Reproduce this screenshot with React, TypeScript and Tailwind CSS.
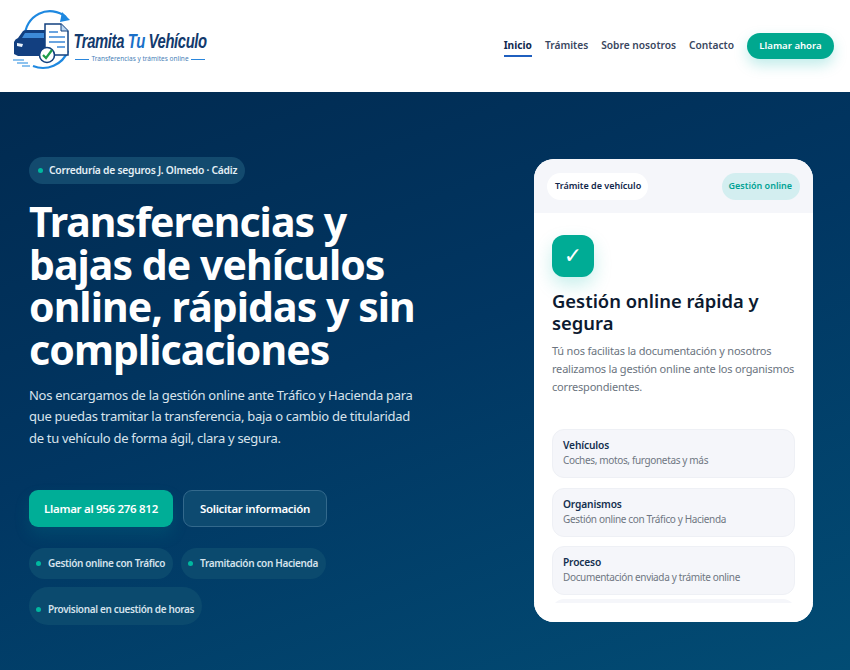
const Logo = () => {
  return (
    <div className="flex items-center">
      <svg width="60" height="80" viewBox="12 6 60 80" className="shrink-0">
        <path d="M25 37 A25 25 0 0 1 66 17" fill="none" stroke="#1e88e0" strokeWidth="2.2" />
        <path d="M62 12 L70 20 L60 22 Z" fill="#1e88e0" />
        <path d="M33 66 A27 27 0 0 0 68 51" fill="none" stroke="#1e88e0" strokeWidth="2.2" />
        <path d="M14 50 L14 42 Q15 39 18 38 L23 31 Q24 30 27 30 L45 30 L45 56 L18 56 L14 54 Z" fill="#123f80" />
        <path d="M22 38 L25 33 L44 33 L44 38 Z" fill="#3d8ad8" />
        <path d="M17 43 L23 44 L22 47 L17 46 Z" fill="#e8f1fb" />
        <path d="M13 60 H24 M17 63 H28 M22 66 H30" stroke="#1e88e0" strokeWidth="1.2" />
        <path d="M45 24 L61 24 L68 31 L68 55 L45 55 Z" fill="#ffffff" stroke="#12407f" strokeWidth="1.5" />
        <path d="M61 24 L61 31 L68 31" fill="#bcd8f3" stroke="#12407f" strokeWidth="1" />
        <path d="M49 32 H58 M49 37 H65 M49 42 H65 M57 47 H65" stroke="#3a86d6" strokeWidth="1.4" />
        <circle cx="47" cy="55" r="7.5" fill="#ffffff" stroke="#12407f" strokeWidth="1.6" />
        <path d="M43 55 L46 58 L52 50" fill="none" stroke="#1f9e4a" strokeWidth="2.2" />
      </svg>
      <div className="flex flex-col items-center ml-px mt-px w-[134px]">
        <span className="font-['Liberation_Sans',sans-serif] italic font-bold text-[20px] leading-[22px] text-[#123a6d] tracking-[-0.5px] whitespace-nowrap scale-x-[0.74]">
          Tramita <span className="text-[#1a70c8]">Tu</span> Vehículo
        </span>
        <div className="flex items-center gap-[2px] mt-[3px]">
          <span className="w-[14px] h-px bg-[#2a86dc]" />
          <span className="text-[6.5px] leading-[8px] text-[#4a7fb8] whitespace-nowrap">
            Transferencias y trámites online
          </span>
          <span className="w-[14px] h-px bg-[#2a86dc]" />
        </div>
      </div>
    </div>
  );
};

const Header = () => {
  return (
    <header className="h-[92px] bg-white flex items-center justify-between pl-[12px] pr-[16px]">
      <Logo />
      <nav className="flex items-center gap-[13px] text-[10.2px] font-semibold text-[#3a4760]">
        <a href="#" className="font-bold text-[#10294f] border-b-2 border-[#1f5fbf] pb-px mt-[3px]">
          Inicio
        </a>
        <a href="#">Trámites</a>
        <a href="#">Sobre nosotros</a>
        <a href="#">Contacto</a>
        <a
          href="#"
          className="w-[87px] h-[26px] flex items-center justify-center rounded-full bg-[#00a88f] text-[9.6px] text-white shadow-[0_6px_14px_rgba(0,180,170,0.25)]"
        >
          Llamar ahora
        </a>
      </nav>
    </header>
  );
};

const Chip = ({ children, tall }: { children: string; tall?: boolean }) => {
  return (
    <span
      className={
        tall
          ? "h-[38px] pt-[6px] pl-[7px] pr-[8px] flex items-center gap-[7px] rounded-[19px] bg-[#0b4a6e] text-[10px] tracking-[-0.35px] font-semibold text-[#d5e2ec] whitespace-nowrap"
          : "h-[31px] pl-[7px] pr-[8px] flex items-center gap-[7px] rounded-full bg-[#0b4a6e] text-[10px] tracking-[-0.35px] font-semibold text-[#d5e2ec] whitespace-nowrap"
      }
    >
      <span className="w-[5px] h-[5px] rounded-full bg-[#00b8a0]" />
      {children}
    </span>
  );
};

const InfoRow = ({ title, text }: { title: string; text: string }) => {
  return (
    <div className="h-[49px] px-[10px] pt-[8px] rounded-[12px] bg-[#f5f6fa] border border-[#eef0f5]">
      <div className="text-[10.2px] tracking-[-0.15px] leading-[15px] font-semibold text-[#14304f]">{title}</div>
      <div className="text-[10px] tracking-[-0.35px] leading-[15px] text-[#6f7782]">{text}</div>
    </div>
  );
};

const App = () => {
  return (
    <div className="w-[850px] h-[670px] overflow-hidden font-['Noto_Sans',sans-serif] bg-white">
      <Header />
      <main className="h-[578px] flex justify-between pl-[29px] pr-[37px] pt-[65px] bg-[linear-gradient(160deg,#012a50_0%,#013662_45%,#024c74_100%)]">
        <section className="w-[400px]">
          <div className="w-fit h-[27px] pl-[9px] pr-[8px] flex items-center gap-[6px] rounded-full bg-[#134a6e] text-[10.3px] tracking-[-0.25px] font-semibold text-[#e4eff5]">
            <span className="w-[5px] h-[5px] rounded-full bg-[#00b89f]" />
            Correduría de seguros J. Olmedo · Cádiz
          </div>
          <h1 className="mt-[16px] w-[400px] text-[41px] leading-[42.7px] tracking-[-0.95px] font-bold text-white">
            Transferencias y bajas de vehículos online, rápidas y sin complicaciones
          </h1>
          <p className="mt-[14px] w-[392px] text-[13px] tracking-[-0.3px] leading-[21.5px] text-[#d8e3ec]">
            Nos encargamos de la gestión online ante Tráfico y Hacienda para que puedas tramitar la transferencia, baja o cambio de titularidad de tu vehículo de forma ágil, clara y segura.
          </p>
          <div className="mt-[41px] flex gap-[10px] text-[11.5px] tracking-[-0.3px] font-semibold text-white">
            <a href="#" className="w-[144px] h-[37px] flex items-center justify-center rounded-[9px] bg-[#00ae97] shadow-[0_8px_16px_rgba(0,170,160,0.15)]">
              Llamar al 956 276 812
            </a>
            <a href="#" className="w-[144px] h-[37px] flex items-center justify-center rounded-[9px] bg-[#0d4a70] border border-[#33698c]">
              Solicitar información
            </a>
          </div>
          <div className="mt-[21px] w-[310px] flex flex-wrap gap-x-[8px] gap-y-[8px]">
            <Chip>Gestión online con Tráfico</Chip>
            <Chip>Tramitación con Hacienda</Chip>
            <Chip tall>Provisional en cuestión de horas</Chip>
          </div>
        </section>

        <aside className="w-[279px] h-[463px] mt-[2px] rounded-[20px] bg-white overflow-hidden flex flex-col">
          <div className="h-[54px] shrink-0 px-[13px] flex items-center justify-between bg-[#f5f6fa] text-[9px] font-semibold">
            <span className="h-[27px] pl-[8px] pr-[7px] flex items-center rounded-full bg-white text-[#10264a]">Trámite de vehículo</span>
            <span className="h-[27px] pl-[7px] pr-[8px] flex items-center rounded-full bg-[#d3eef0] text-[#00a294]">Gestión online</span>
          </div>
          <div className="px-[18px] pt-[22px] flex-1 overflow-hidden">
            <div className="w-[42px] h-[42px] flex items-center justify-center rounded-[12px] bg-[#00ac95] shadow-[0_8px_18px_rgba(0,180,170,0.22)]">
              <span className="font-['DejaVu_Sans',sans-serif] text-[22px] leading-none text-white">✓</span>
            </div>
            <h2 className="mt-[13px] text-[18.4px] leading-[22px] font-semibold text-[#0c1a30]">
              Gestión online rápida y segura
            </h2>
            <p className="mt-[8px] w-[250px] text-[11px] tracking-[-0.2px] leading-[18px] text-[#6b7480]">
              Tú nos facilitas la documentación y nosotros realizamos la gestión online ante los organismos correspondientes.
            </p>
            <div className="mt-[33px] flex flex-col gap-[9.5px]">
              <InfoRow title="Vehículos" text="Coches, motos, furgonetas y más" />
              <InfoRow title="Organismos" text="Gestión online con Tráfico y Hacienda" />
              <InfoRow title="Proceso" text="Documentación enviada y trámite online" />
              <div className="h-[49px] -mt-[5.5px] rounded-[12px] bg-[#f5f6fa]" />
            </div>
          </div>
          <div className="h-[19px] shrink-0 bg-white" />
        </aside>
      </main>
    </div>
  );
};

export default App;
